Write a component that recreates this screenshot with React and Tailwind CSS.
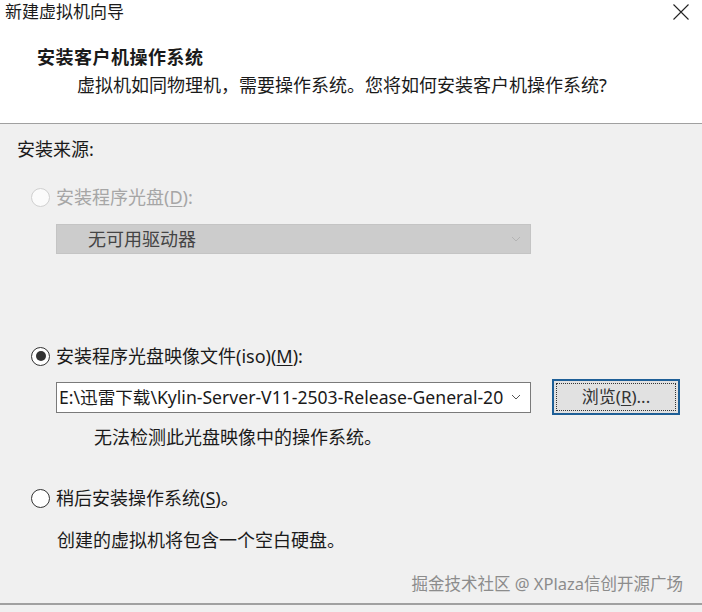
import React from "react";

const FONT = { fontFamily: '"Noto Sans", "Noto Sans CJK SC", sans-serif' };

function Chevron({ color }) {
  return (
    <svg width="10" height="6" viewBox="0 0 10 6" fill="none">
      <path d="M1 1 L5 5 L9 1" stroke={color} strokeWidth="1" />
    </svg>
  );
}

function Radio({ state }) {
  if (state === "disabled") {
    return <div className="w-[19px] h-[19px] rounded-full border border-[#d0d0d0] bg-[#fbfbfb] shrink-0" />;
  }
  return (
    <div className="w-[19px] h-[19px] rounded-full border border-[#333333] bg-white shrink-0 flex items-center justify-center">
      {state === "checked" && <div className="w-[10px] h-[10px] rounded-full bg-[#333333]" />}
    </div>
  );
}

export default function App() {
  return (
    <div className="w-[702px] h-[612px] bg-[#f0f0f0] flex flex-col overflow-hidden text-[#1a1a1a]" style={FONT}>
      <div className="h-[124px] bg-white border-b border-[#a0a0a0] flex flex-col shrink-0">
        <div className="h-[24px] flex items-center justify-between pl-[5px] pr-[13px]">
          <span className="text-[17px] leading-[24px]">新建虚拟机向导</span>
          <svg width="16" height="16" viewBox="0 0 16 16" fill="none">
            <path d="M0.5 0.5 L15.5 15.5 M15.5 0.5 L0.5 15.5" stroke="#222" strokeWidth="1.1" />
          </svg>
        </div>
        <div className="mt-[21px] pl-[37px] text-[18px] leading-[24px] font-bold tracking-[0.5px]">安装客户机操作系统</div>
        <div className="mt-[4px] pl-[77px] text-[18px] leading-[24px]">
          虚拟机如同物理机，需要操作系统。您将如何安装客户机操作系统?
        </div>
      </div>

      <div className="mt-[13px] pl-[17px] text-[18px] leading-[24px]">安装来源:</div>

      <div className="mt-[24px] pl-[31px] flex items-center gap-[6px] h-[24px]">
        <Radio state="disabled" />
        <span className="text-[18px] leading-[24px] text-[#a6a6a6]">
          安装程序光盘(<span className="underline underline-offset-2">D</span>):
        </span>
      </div>

      <div className="mt-[15px] ml-[56px] w-[475px] h-[30px] bg-[#cccccc] border border-[#c4c4c4] flex items-center justify-between pl-[31px] pr-[9px]">
        <span className="text-[18px] leading-[24px] text-[#444444]">无可用驱动器</span>
        <Chevron color="#b4b4b4" />
      </div>

      <div className="mt-[90px] pl-[31px] flex items-center gap-[6px] h-[24px]">
        <Radio state="checked" />
        <span className="text-[18px] leading-[24px]">
          安装程序光盘映像文件(iso)(<span className="underline underline-offset-2">M</span>):
        </span>
      </div>

      <div className="mt-[11px] ml-[56px] flex items-center h-[36px]">
        <div className="w-[475px] h-[31px] bg-white border border-[#7a7a7a] flex items-center justify-between pl-[2px] pr-[9px]">
          <span className="text-[17.6px] leading-[24px] whitespace-nowrap">
            E:\迅雷下载\Kylin-Server-V11-2503-Release-General-20
          </span>
          <Chevron color="#555555" />
        </div>
        <div className="ml-[21px] w-[128px] h-[36px] bg-[#e1e1e1] border-2 border-[#1e5f97] flex items-center justify-center outline-1 outline-dotted outline-[#333] outline-offset-[-5px]">
          <span className="text-[17px] leading-[24px] text-[#333333]">
            浏览(<span className="underline underline-offset-2">R</span>)...
          </span>
        </div>
      </div>

      <div className="mt-[10px] pl-[94px] text-[18px] leading-[24px]">无法检测此光盘映像中的操作系统。</div>

      <div className="mt-[37px] pl-[31px] flex items-center gap-[6px] h-[24px]">
        <Radio state="unchecked" />
        <span className="text-[18px] leading-[24px]">
          稍后安装操作系统(<span className="underline underline-offset-2">S</span>)。
        </span>
      </div>

      <div className="mt-[18px] pl-[57px] text-[18px] leading-[24px]">创建的虚拟机将包含一个空白硬盘。</div>

      <div className="mt-[20px] pr-[19px] flex justify-end">
        <span className="text-[16.5px] leading-[24px] text-[#8c8c8c] whitespace-nowrap">掘金技术社区 @ XPlaza信创开源广场</span>
      </div>

      <div className="mt-[7px] border-t-2 border-[#a0a0a0]" />
    </div>
  );
}
